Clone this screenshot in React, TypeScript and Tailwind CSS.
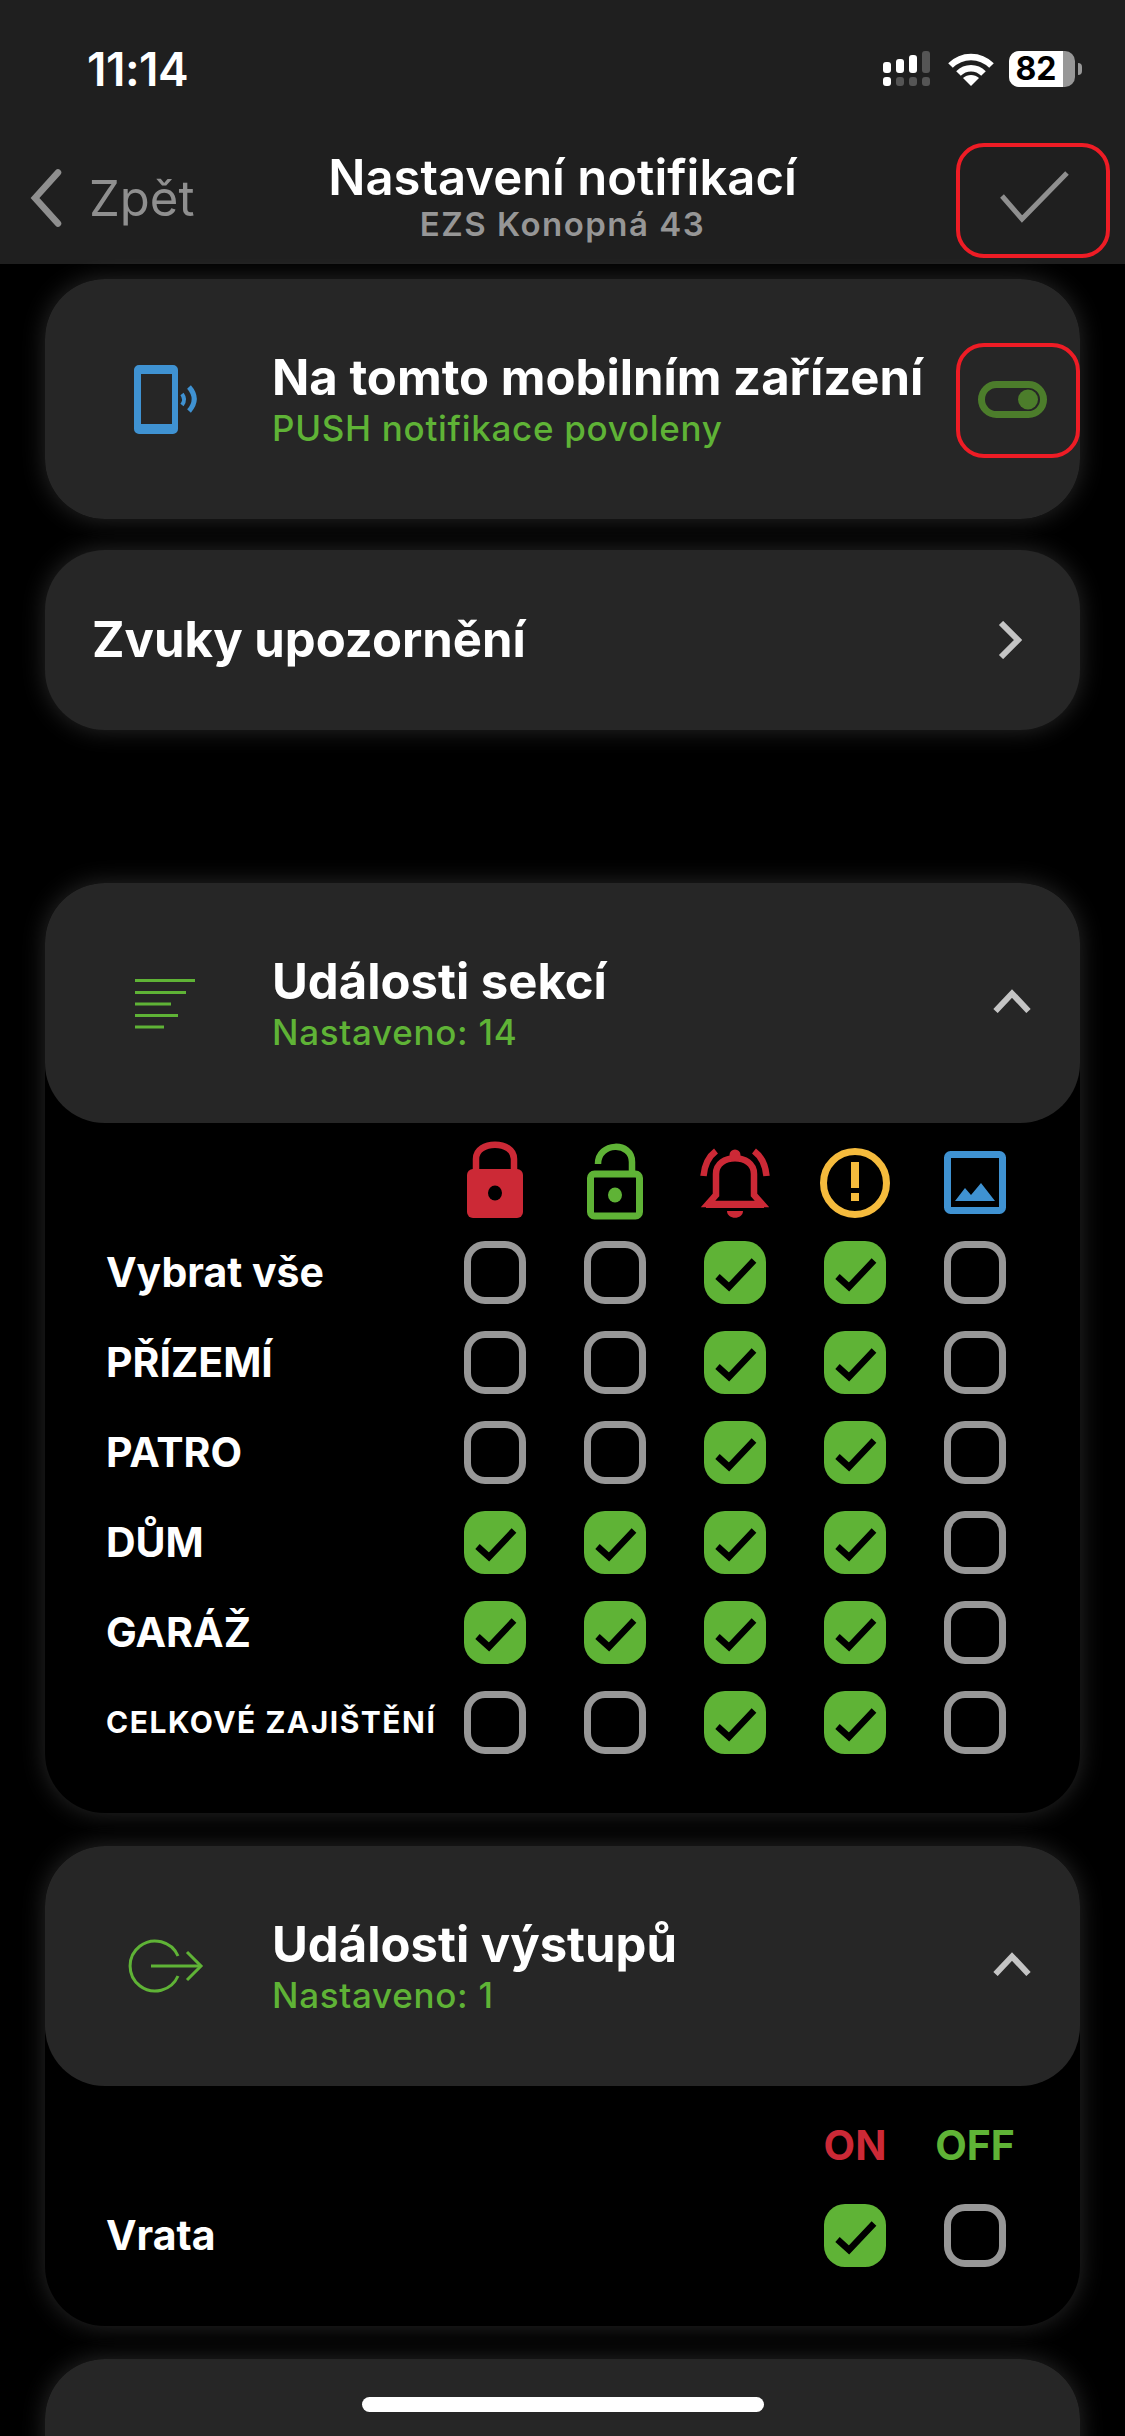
import { ReactNode } from "react"

const GREEN = "#5fb336"
const RED = "#cc2936"
const BLUE = "#3f92d2"

const sectionRows = [
    { label: "Vybrat vše", values: [false, false, true, true, false] },
    { label: "PŘÍZEMÍ", values: [false, false, true, true, false] },
    { label: "PATRO", values: [false, false, true, true, false] },
    { label: "DŮM", values: [true, true, true, true, false] },
    { label: "GARÁŽ", values: [true, true, true, true, false] },
    { label: "CELKOVÉ ZAJIŠTĚNÍ", values: [false, false, true, true, false], small: true },
]

function Checkbox({ checked }: { checked: boolean }) {
    if (checked) {
        return (
            <div className="h-[63px] w-[62px] rounded-[21px] bg-[#5fb336]">
                <svg width="62" height="63" viewBox="0 0 62 63" fill="none">
                    <path d="M13.5 35.5 L25 46 L50 19.5" stroke="#000" strokeWidth="6.5" />
                </svg>
            </div>
        )
    }
    return <div className="h-[63px] w-[62px] rounded-[21px] border-[7px] border-[#979797]" />
}

function HeaderCard({ icon, title, subtitle, right }: { icon: ReactNode; title: string; subtitle: string; right: ReactNode }) {
    return (
        <div className="flex h-[240px] items-center rounded-[60px] bg-[#262626]">
            <div className="ml-[60px] flex w-[167px] shrink-0 items-center">{icon}</div>
            <div className="flex-1">
                <div className="text-[49px] leading-[56px] font-bold text-white whitespace-nowrap">{title}</div>
                <div className="mt-[2px] text-[35px] leading-[40px] font-medium tracking-[0.7px] text-[#5fb336] whitespace-nowrap">{subtitle}</div>
            </div>
            {right}
        </div>
    )
}

function ChevronUp() {
    return (
        <svg className="mr-[49px] mt-[-4px]" width="38" height="24" viewBox="0 0 38 24" fill="none">
            <path d="M2.5 22 L19 4.5 L35.5 22" stroke="#c4c4c4" strokeWidth="6" />
        </svg>
    )
}

function ColumnIcons() {
    return (
        <>
            <svg className="mx-[-9px] mb-[-7px]" width="80" height="80" viewBox="0 0 80 80" fill="none">
                <path d="M21 32 V18 C21 -1 59 -1 59 18 V32" stroke={RED} strokeWidth="6.5" />
                <rect x="12" y="28" width="56" height="49" rx="6" fill={RED} />
                <ellipse cx="40" cy="52" rx="7" ry="7.5" fill="#000" />
            </svg>
            <svg className="mx-[-9px] mb-[-7px]" width="80" height="80" viewBox="0 0 80 80" fill="none">
                <path d="M23 23 C23 1 57 0 57 21 V32" stroke={GREEN} strokeWidth="6.5" />
                <rect x="15.5" y="33" width="49" height="42" rx="4" stroke={GREEN} strokeWidth="7" />
                <ellipse cx="40" cy="54" rx="7" ry="7.5" fill={GREEN} />
            </svg>
            <svg className="mx-[-9px] mb-[-7px]" width="80" height="80" viewBox="0 0 80 80" fill="none">
                <path d="M21 33 V54 L13 63 H67 L59 54 V33 C59 12 21 12 21 33 Z" stroke={RED} strokeWidth="6.5" />
                <rect x="11" y="60" width="58" height="7" fill={RED} />
                <circle cx="40" cy="14" r="5.5" fill={RED} />
                <path d="M32 70 H48 C48 79 32 79 32 70 Z" fill={RED} />
                <path d="M8.5 35 C9.5 24 13 16 21 10" stroke={RED} strokeWidth="6.5" />
                <path d="M71.5 35 C70.5 24 67 16 59 10" stroke={RED} strokeWidth="6.5" />
            </svg>
            <svg className="mx-[-9px] mb-[-7px]" width="80" height="80" viewBox="0 0 80 80" fill="none">
                <ellipse cx="40" cy="42" rx="31.5" ry="31.5" stroke="#f5bb3d" strokeWidth="7" />
                <rect x="36" y="21" width="8" height="26" fill="#f5bb3d" />
                <rect x="36" y="52" width="8" height="8" fill="#f5bb3d" />
            </svg>
            <svg className="mx-[-9px] mb-[-7px]" width="80" height="80" viewBox="0 0 80 80" fill="none">
                <rect x="12.5" y="13.5" width="55" height="56" rx="3" stroke={BLUE} strokeWidth="7" />
                <path d="M20 60 L30 47 L36 54 L46 42 L60 60 Z" fill={BLUE} />
            </svg>
        </>
    )
}

export default function App() {
    return (
        <div className="relative h-[2436px] overflow-hidden bg-black font-['Inter',sans-serif]">
            <header className="h-[264px] bg-[#1f1f1f]">
                <div className="flex h-[138px] items-center justify-between pl-[87px] pr-[43px]">
                    <span className="text-[46px] font-semibold leading-none text-white tracking-[-0.5px]">11:14</span>
                    <div className="flex items-center">
                        <svg width="48" height="36" viewBox="0 0 48 36">
                            <rect x="0" y="11" width="8" height="11" rx="3" fill="#fff" />
                            <rect x="13" y="8" width="8" height="14" rx="3" fill="#fff" />
                            <rect x="26" y="4" width="8" height="18" rx="3" fill="#fff" />
                            <rect x="39" y="0" width="8" height="22" rx="3" fill="#555" />
                            <rect x="0" y="26" width="8" height="9" rx="3" fill="#fff" />
                            <rect x="13" y="26" width="8" height="9" rx="3" fill="#555" />
                            <rect x="26" y="26" width="8" height="9" rx="3" fill="#555" />
                            <rect x="39" y="26" width="8" height="9" rx="3" fill="#555" />
                        </svg>
                        <svg className="ml-[17px]" width="46" height="34" viewBox="0 0 46 34" fill="none">
                            <path d="M2.5 13.5 C14 2 32 2 43.5 13.5" stroke="#fff" strokeWidth="6.5" />
                            <path d="M10.5 21.5 C17.5 14.5 28.5 14.5 35.5 21.5" stroke="#fff" strokeWidth="6.5" />
                            <path d="M23 34 L15 26 C19.5 22 26.5 22 31 26 Z" fill="#fff" />
                        </svg>
                        <div className="ml-[15px] flex h-[36px] w-[66px] rounded-[10px] bg-[#979797]">
                            <div className="flex w-[54px] items-center justify-center rounded-l-[10px] bg-white text-[32px] font-bold leading-none text-black">82</div>
                        </div>
                        <div className="ml-[3px] h-[12px] w-[4px] rounded-r-full bg-[#979797]" />
                    </div>
                </div>
                <div className="grid h-[126px] grid-cols-[1fr_auto_1fr]">
                    <div className="flex items-center pb-[6px] pl-[29px]">
                        <svg width="34" height="58" viewBox="0 0 34 58" fill="none">
                            <path d="M29 3.5 L6 29 L29 54.5" stroke="#8f8f8f" strokeWidth="6.5" strokeLinecap="round" />
                        </svg>
                        <span className="ml-[26px] text-[49px] leading-none text-[#8f8f8f]">Zpět</span>
                    </div>
                    <div className="flex flex-col items-center pt-[12px]">
                        <span className="text-[49px] font-semibold leading-[56px] text-white">Nastavení notifikací</span>
                        <span className="text-[33px] font-semibold leading-[36px] tracking-[1.5px] text-[#969696]">EZS Konopná 43</span>
                    </div>
                    <div className="flex items-center justify-end pb-[8px] pr-[56px]">
                        <svg width="70" height="52" viewBox="0 0 70 52" fill="none">
                            <path d="M3 25 L23 48 L68 2" stroke="#8f8f8f" strokeWidth="5" />
                        </svg>
                    </div>
                </div>
            </header>

            <main className="flex flex-col px-[45px]">
                <div className="mt-[15px] rounded-[60px] shadow-[0_0_24px_rgba(255,255,255,0.16)]">
                    <HeaderCard
                        icon={
                            <svg width="100" height="80" viewBox="0 0 100 80" fill="none">
                                <path
                                    fillRule="evenodd"
                                    d="M34 6 H68 A5 5 0 0 1 73 11 V70 A5 5 0 0 1 68 75 H34 A5 5 0 0 1 29 70 V11 A5 5 0 0 1 34 6 Z M36 15 V65 H67 V15 Z"
                                    fill={BLUE}
                                />
                                <path d="M77 35 C80 39 80 42 77 46" stroke={BLUE} strokeWidth="4" />
                                <path d="M84 28 C91 36 91 44 84 52" stroke={BLUE} strokeWidth="5" />
                            </svg>
                        }
                        title="Na tomto mobilním zařízení"
                        subtitle="PUSH notifikace povoleny"
                        right={
                            <svg className="mr-[33px]" width="69" height="37" viewBox="0 0 69 37" fill="none">
                                <rect x="3.5" y="3.5" width="62" height="30" rx="15" stroke="#4c7d2b" strokeWidth="7" />
                                <circle cx="50" cy="18.5" r="10" fill="#4c7d2b" />
                            </svg>
                        }
                    />
                </div>

                <div className="mt-[31px] flex h-[180px] items-center justify-between rounded-[60px] bg-[#262626] pl-[47px] pr-[58px] shadow-[0_0_24px_rgba(255,255,255,0.16)]">
                    <span className="text-[49px] font-bold text-white">Zvuky upozornění</span>
                    <svg width="24" height="38" viewBox="0 0 24 38" fill="none">
                        <path d="M3 2 L20 19 L3 36" stroke="#c4c4c4" strokeWidth="6" />
                    </svg>
                </div>

                <section className="mt-[153px] h-[930px] rounded-[60px] bg-black shadow-[0_0_24px_rgba(255,255,255,0.16)]">
                    <HeaderCard
                        icon={
                            <svg width="100" height="60" viewBox="0 0 100 60" fill="none" stroke={GREEN} strokeWidth="3">
                                <path d="M30 7.5 H90" />
                                <path d="M30 19.5 H81" />
                                <path d="M30 31 H66" />
                                <path d="M30 42.5 H73" />
                                <path d="M30 54 H59" />
                            </svg>
                        }
                        title="Události sekcí"
                        subtitle="Nastaveno: 14"
                        right={<ChevronUp />}
                    />
                    <div className="grid grid-cols-[361px_repeat(5,62px)] items-center gap-x-[58px] gap-y-[27px] pt-[18px]">
                        <div />
                        <ColumnIcons />
                        {sectionRows.map((row) => (
                            <div key={row.label} className="contents">
                                <span className={row.small ? "ml-[61px] text-[30px] font-bold tracking-[1.5px] text-white whitespace-nowrap" : "ml-[61px] text-[41px] font-bold text-white"}>
                                    {row.label}
                                </span>
                                {row.values.map((v, i) => (
                                    <Checkbox key={i} checked={v} />
                                ))}
                            </div>
                        ))}
                    </div>
                </section>

                <section className="mt-[33px] h-[480px] rounded-[60px] bg-black shadow-[0_0_24px_rgba(255,255,255,0.16)]">
                    <HeaderCard
                        icon={
                            <svg width="100" height="60" viewBox="0 0 100 60" fill="none" stroke={GREEN} strokeWidth="3">
                                <path d="M73 20 A25 25 0 1 0 73 40" />
                                <path d="M46 30 H96" />
                                <path d="M82 16 L96 30 L82 44" />
                            </svg>
                        }
                        title="Události výstupů"
                        subtitle="Nastaveno: 1"
                        right={<ChevronUp />}
                    />
                    <div className="grid grid-cols-[1fr_62px_62px] items-center gap-x-[58px] pr-[74px] pt-[37px]">
                        <div />
                        <span className="flex justify-center text-[41px] font-bold leading-[45px] text-[#cc2936]">ON</span>
                        <span className="flex justify-center text-[41px] font-bold leading-[45px] text-[#5fb336]">OFF</span>
                        <span className="mt-[36px] ml-[61px] text-[41px] font-bold text-white">Vrata</span>
                        <div className="mt-[36px]"><Checkbox checked={true} /></div>
                        <div className="mt-[36px]"><Checkbox checked={false} /></div>
                    </div>
                </section>

                <div className="mt-[33px] rounded-[60px] shadow-[0_0_24px_rgba(255,255,255,0.16)]">
                    <HeaderCard
                        icon={<div />}
                        title="Události systémů"
                        subtitle=""
                        right={<ChevronUp />}
                    />
                </div>
            </main>

            {/* red marks on top of the screenshot */}
            <div className="absolute left-[956px] top-[143px] h-[115px] w-[154px] rounded-[28px] border-[4px] border-[#ee1c25]" />
            <div className="absolute left-[956px] top-[343px] h-[115px] w-[124px] rounded-[28px] border-[4px] border-[#ee1c25]" />
            <div className="absolute left-[362px] top-[2397px] h-[15px] w-[402px] rounded-full bg-white" />
        </div>
    )
}
